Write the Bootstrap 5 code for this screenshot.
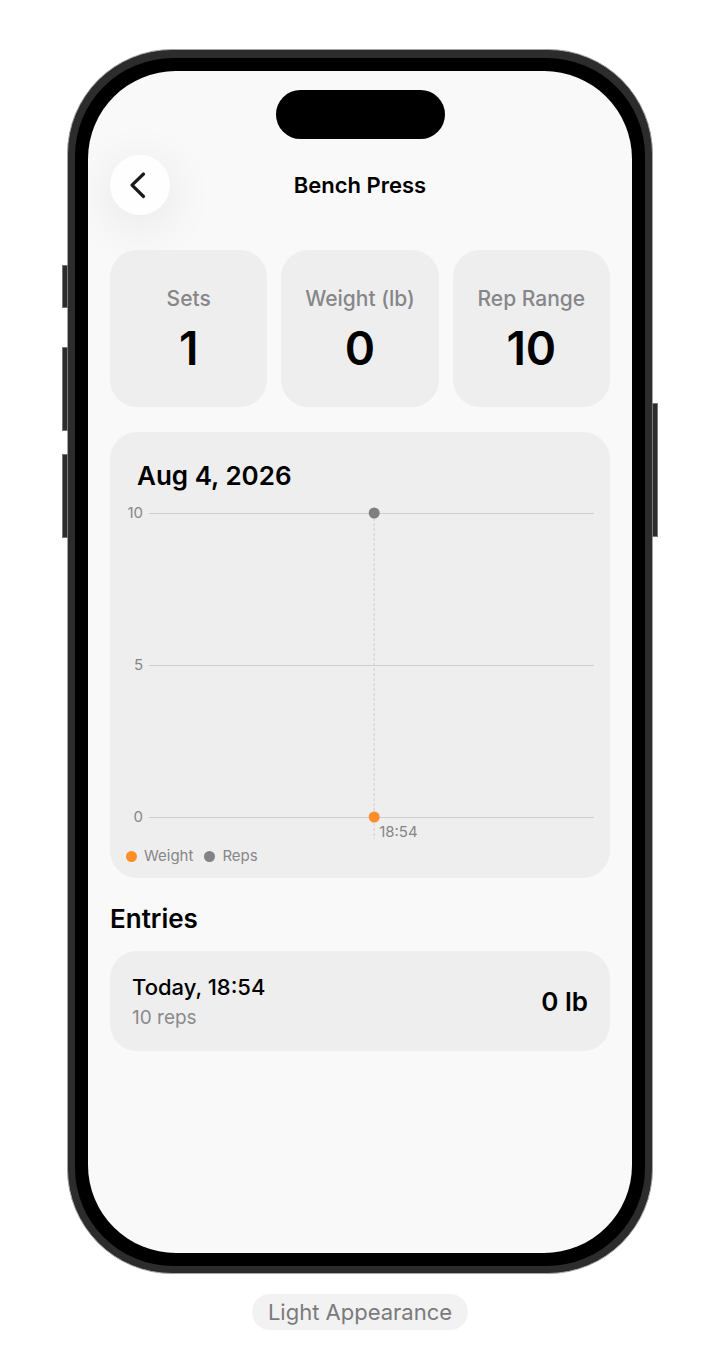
<!DOCTYPE html>
<html lang="en">
<head>
<meta charset="utf-8">
<meta name="viewport" content="width=device-width, initial-scale=1">
<title>Bench Press</title>
<link href="https://cdn.jsdelivr.net/npm/bootstrap@5.3.0/dist/css/bootstrap.min.css" rel="stylesheet">
<style>
  body { font-family: Inter, "Liberation Sans", sans-serif; color: #000; background: #fff; }
  .stage { padding: 49px 15px 30px 17px; }
  .phone { max-width: 586px; border: 1px solid #a4a6a5; border-radius: 105px; background: #2c2c2c; padding: 8px 7px 7px; }
  .bezel { background: #000; border-radius: 98px; padding: 13px; }
  .phone-screen { background: #f9f9f9; border-radius: 88px; min-height: 1182px; padding: 19px 22px 22px; }
  .side-key { position: absolute; width: 6px; background: #2c2c2c; border: 1px solid #777; }
  .key-left { right: 100%; }
  .key-right { left: 100%; }
  .key-action { top: 215px; height: 43px; }
  .key-up { top: 297px; height: 84px; }
  .key-down { top: 404px; height: 84px; }
  .key-power { top: 353px; height: 134px; }
  .island { width: 169px; height: 49px; background: #000; }
  .title-bar { display: grid; grid-template-columns: 60px 1fr 60px; margin-top: 16px; }
  .back-btn { width: 60px; height: 60px; background: #fefefe; box-shadow: 0 10px 52px rgba(0,0,0,.09); }
  .title-text { font-size: 22px; line-height: 28px; font-weight: 600; }
  .tile { background: #eee; border-radius: 27px; }
  .stats { display: grid; grid-template-columns: repeat(3, 1fr); gap: 14px; margin-top: 35px; }
  .stat { min-height: 157px; padding-top: 3px; }
  .stat-name { font-size: 21px; line-height: 28px; font-weight: 500; color: #868689; }
  .stat-value { font-size: 46px; line-height: 56px; font-weight: 600; margin-top: 7px; }
  .chart-tile { margin-top: 25px; padding: 28px 16px 12px; }
  .heading { font-size: 26px; line-height: 32px; font-weight: 600; }
  .chart-tile .heading { padding-left: 11px; }
  .plot-row { margin-top: 13px; gap: 6px; }
  .y-axis { width: 17px; height: 320px; margin-bottom: 14px; text-align: right; }
  .axis-text { font-size: 15px; line-height: 16px; color: #868689; fill: #868689; }
  .plot { height: 334px; }
  .legend-dot { width: 11px; height: 11px; margin-right: 7px; }
  .legend-row { gap: 11px; margin-top: 7px; line-height: 20px; }
  .entries-title { margin-top: 25px; }
  .entry { margin-top: 16px; padding: 20px 22px 18px; min-height: 100px; }
  .entry-time { font-size: 22px; line-height: 32px; font-weight: 500; }
  .entry-reps { font-size: 19px; line-height: 30px; color: #8a8a8c; }
  .caption-pill { margin-top: 20px; background: #f2f2f2; color: #7a7a7a; font-size: 22px; line-height: 36px; padding: 0 16px; }
</style>
</head>
<body>
<div class="stage d-flex flex-column align-items-center">
  <div class="phone position-relative w-100">
    <span class="side-key key-left key-action"></span>
    <span class="side-key key-left key-up"></span>
    <span class="side-key key-left key-down"></span>
    <span class="side-key key-right key-power"></span>
    <div class="bezel">
      <main class="phone-screen">
        <div class="island rounded-pill mx-auto"></div>
        <header class="title-bar align-items-center text-center">
          <button class="back-btn btn border-0 rounded-circle p-0 d-flex align-items-center justify-content-center" type="button" aria-label="Back">
            <svg width="24" height="28" viewBox="0 0 24 28" fill="none" stroke="#1a1a1a" stroke-width="3.200" stroke-linecap="round" stroke-linejoin="round"><path d="M15.500 3 4 14.200l11.500 11.300"/></svg>
          </button>
          <h1 class="title-text m-0">Bench Press</h1>
        </header>

        <section class="stats text-center">
          <div class="tile stat d-flex flex-column justify-content-center"><div class="stat-name">Sets</div><div class="stat-value">1</div></div>
          <div class="tile stat d-flex flex-column justify-content-center"><div class="stat-name">Weight (lb)</div><div class="stat-value">0</div></div>
          <div class="tile stat d-flex flex-column justify-content-center"><div class="stat-name">Rep Range</div><div class="stat-value">10</div></div>
        </section>

        <section class="tile chart-tile">
          <h2 class="heading mb-0">Aug 4, 2026</h2>
          <div class="plot-row d-flex">
            <div class="y-axis axis-text d-flex flex-column justify-content-between flex-shrink-0"><span>10</span><span>5</span><span>0</span></div>
            <svg class="plot flex-grow-1 w-100 overflow-visible" role="img" aria-label="Weight and reps at 18:54">
              <g stroke="#cdcdcd" stroke-width="1" shape-rendering="crispEdges">
                <line x1="0" x2="100%" y1="8" y2="8"/>
                <line x1="0" x2="100%" y1="160" y2="160"/>
                <line x1="0" x2="100%" y1="312" y2="312"/>
              </g>
              <svg x="50.600%" class="overflow-visible">
                <line x1="0" x2="0" y1="8" y2="334" stroke="#cdcdcd" stroke-dasharray="3 2"/>
                <circle cx="0" cy="8" r="5.500" fill="#7f7f82"/>
                <circle cx="0" cy="312" r="5.500" fill="#ff8d28"/>
                <text class="axis-text" x="5" y="332">18:54</text>
              </svg>
            </svg>
          </div>
          <div class="legend-row axis-text d-flex">
            <span class="d-flex align-items-center"><span class="legend-dot rounded-circle" style="background:#ff8d28"></span>Weight</span>
            <span class="d-flex align-items-center"><span class="legend-dot rounded-circle" style="background:#838387"></span>Reps</span>
          </div>
        </section>

        <h2 class="heading entries-title mb-0">Entries</h2>
        <article class="tile entry d-flex align-items-center justify-content-between">
          <div>
            <div class="entry-time">Today, 18:54</div>
            <div class="entry-reps">10 reps</div>
          </div>
          <div class="heading">0 lb</div>
        </article>
      </main>
    </div>
  </div>
  <div class="caption-pill rounded-pill">Light Appearance</div>
</div>
<script src="https://cdn.jsdelivr.net/npm/bootstrap@5.3.0/dist/js/bootstrap.bundle.min.js"></script>
</body>
</html>
